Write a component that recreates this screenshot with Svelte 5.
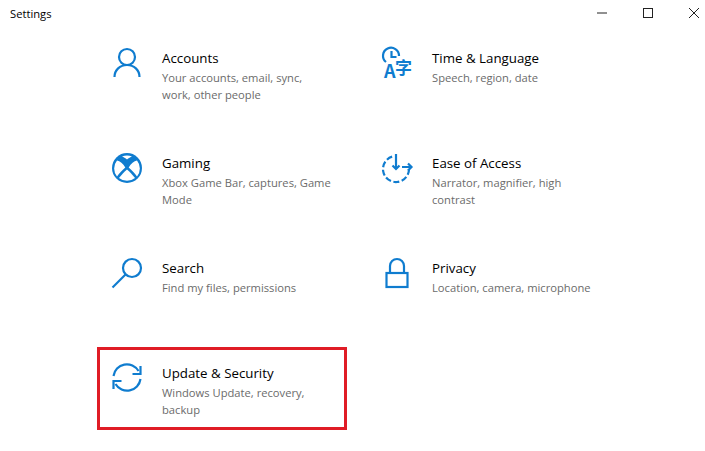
<script>
  const items = [
    { id: 'accounts', title: 'Accounts', desc: 'Your accounts, email, sync, work, other people' },
    { id: 'time', title: 'Time & Language', desc: 'Speech, region, date' },
    { id: 'gaming', title: 'Gaming', desc: 'Xbox Game Bar, captures, Game Mode' },
    { id: 'ease', title: 'Ease of Access', desc: 'Narrator, magnifier, high contrast' },
    { id: 'search', title: 'Search', desc: 'Find my files, permissions' },
    { id: 'privacy', title: 'Privacy', desc: 'Location, camera, microphone' },
    { id: 'update', title: 'Update & Security', desc: 'Windows Update, recovery, backup', selected: true }
  ];
</script>

<div class="window">
  <header class="titlebar">
    <span class="app-name">Settings</span>
    <div class="controls">
      <button aria-label="Minimize">
        <svg width="10" height="10" viewBox="0 0 10 10"><line x1="0" y1="5" x2="10" y2="5"></line></svg>
      </button>
      <button aria-label="Maximize">
        <svg width="10" height="10" viewBox="0 0 10 10"><rect x="0.5" y="0.5" width="9" height="9"></rect></svg>
      </button>
      <button aria-label="Close">
        <svg width="10" height="10" viewBox="0 0 10 10"><path d="M0 0L10 10M10 0L0 10"></path></svg>
      </button>
    </div>
  </header>

  <main class="grid">
    {#each items as item}
      <div class="card" class:selected={item.selected}>
        <svg class="icon" width="32" height="32" viewBox="0 0 32 32">
          {#if item.id === 'accounts'}
            <circle cx="16" cy="10" r="8"></circle>
            <path d="M3.500 30c0-7 5.500-12 12.500-12s12.500 5 12.500 12"></path>
          {:else if item.id === 'time'}
            <path d="M5 15a8 8 0 1 1 13-6"></path>
            <path d="M10.500 4v6h5"></path>
            <text class="glyph-a" x="3" y="31">A</text>
            <text class="glyph-zi" x="14" y="27">字</text>
          {:else if item.id === 'gaming'}
            <circle class="solid" cx="16" cy="16" r="15"></circle>
            <path class="hole" d="M6 8.500C9 9 12 11.500 14.300 15.500 11 18.500 8 21.500 6 24.500A12.700 12.700 0 0 1 6 8.500z"></path>
            <path class="hole" d="M26 8.500C23 9 20 11.500 17.700 15.500 21 18.500 24 21.500 26 24.500A12.700 12.700 0 0 0 26 8.500z"></path>
            <path class="hole" d="M16 17.500C13 20 10 23.500 8 26A12.700 12.700 0 0 0 24 26C22 23.500 19 20 16 17.500z"></path>
            <path class="hole" d="M11 4.500A12.700 12.700 0 0 1 21 4.500C19.500 5 17.500 6 16 7.500 14.500 6 12.500 5 11 4.500z"></path>
          {:else if item.id === 'ease'}
            <path class="dashed" d="M28 17a13 13 0 1 1-16-12.600"></path>
            <path d="M15 2v15"></path>
            <path d="M11.500 13.500l3.500 3.500 3.500-3.500"></path>
            <path d="M21 15h9.500M27 11.500l3.500 3.500-3.500 3.500"></path>
          {:else if item.id === 'search'}
            <circle cx="21" cy="11" r="9"></circle>
            <path d="M14.500 17.500L1.500 30.500"></path>
          {:else if item.id === 'privacy'}
            <rect x="5.500" y="16" width="21" height="14"></rect>
            <path d="M9 16V9a7 7 0 0 1 14 0v7"></path>
          {:else}
            <path d="M2.500 14a13.500 13.500 0 0 1 25-5"></path>
            <path d="M29.500 4v8h-8"></path>
            <path d="M29.500 17a13.500 13.500 0 0 1-25 5"></path>
            <path d="M2.500 27v-8h8"></path>
          {/if}
        </svg>
        <div class="text">
          <div class="title">{item.title}</div>
          <div class="desc">{item.desc}</div>
        </div>
      </div>
    {/each}
  </main>
</div>

<style>
  :global(body) {
    margin: 0;
    background: #fff;
    overflow: hidden;
  }

  .window {
    width: 705px;
    height: 451px;
    overflow: hidden;
    font-family: "Open Sans", Roboto, sans-serif;
    color: #000;
  }

  .titlebar {
    display: flex;
    align-items: flex-start;
    justify-content: space-between;
    height: 32px;
  }

  .app-name {
    font-size: 11.2px;
    line-height: 16px;
    padding: 6px 0 0 10px;
  }

  .controls {
    display: flex;
    margin-right: -12px;
  }

  .controls button {
    width: 46px;
    height: 26px;
    padding: 0;
    border: none;
    background: none;
    display: flex;
    align-items: center;
    justify-content: center;
  }

  .controls svg {
    fill: none;
    stroke: #222;
    stroke-width: 1;
  }

  .grid {
    display: grid;
    grid-template-columns: 250px 250px;
    grid-auto-rows: 83px;
    gap: 22px 20px;
    padding-left: 97px;
  }

  .card {
    display: flex;
    gap: 19px;
    padding: 12px 6px 0 11px;
    border: 3px solid transparent;
    box-sizing: border-box;
  }

  .card.selected {
    border-color: #e01c26;
  }

  .icon {
    flex: none;
    overflow: visible;
    fill: none;
    stroke: #0f7ccf;
    stroke-width: 2.2;
  }

  .icon .solid {
    fill: #0f7ccf;
    stroke: none;
  }

  .icon .hole {
    fill: #fff;
    stroke: none;
  }

  .icon .dashed {
    stroke-dasharray: 6 2.500;
  }

  .icon text {
    fill: #0f7ccf;
    stroke: none;
    font-family: "Noto Sans CJK SC", sans-serif;
  }

  .glyph-a {
    font-size: 18px;
    font-weight: 700;
  }

  .glyph-zi {
    font-size: 17px;
    font-weight: 700;
  }

  .text {
    min-width: 0;
    padding-top: 1px;
  }

  .title {
    font-size: 13.3px;
    line-height: 20px;
  }

  .desc {
    font-size: 11.2px;
    line-height: 17px;
    color: #6b6b6b;
    margin-top: 1px;
    max-width: 170px;
  }
</style>
